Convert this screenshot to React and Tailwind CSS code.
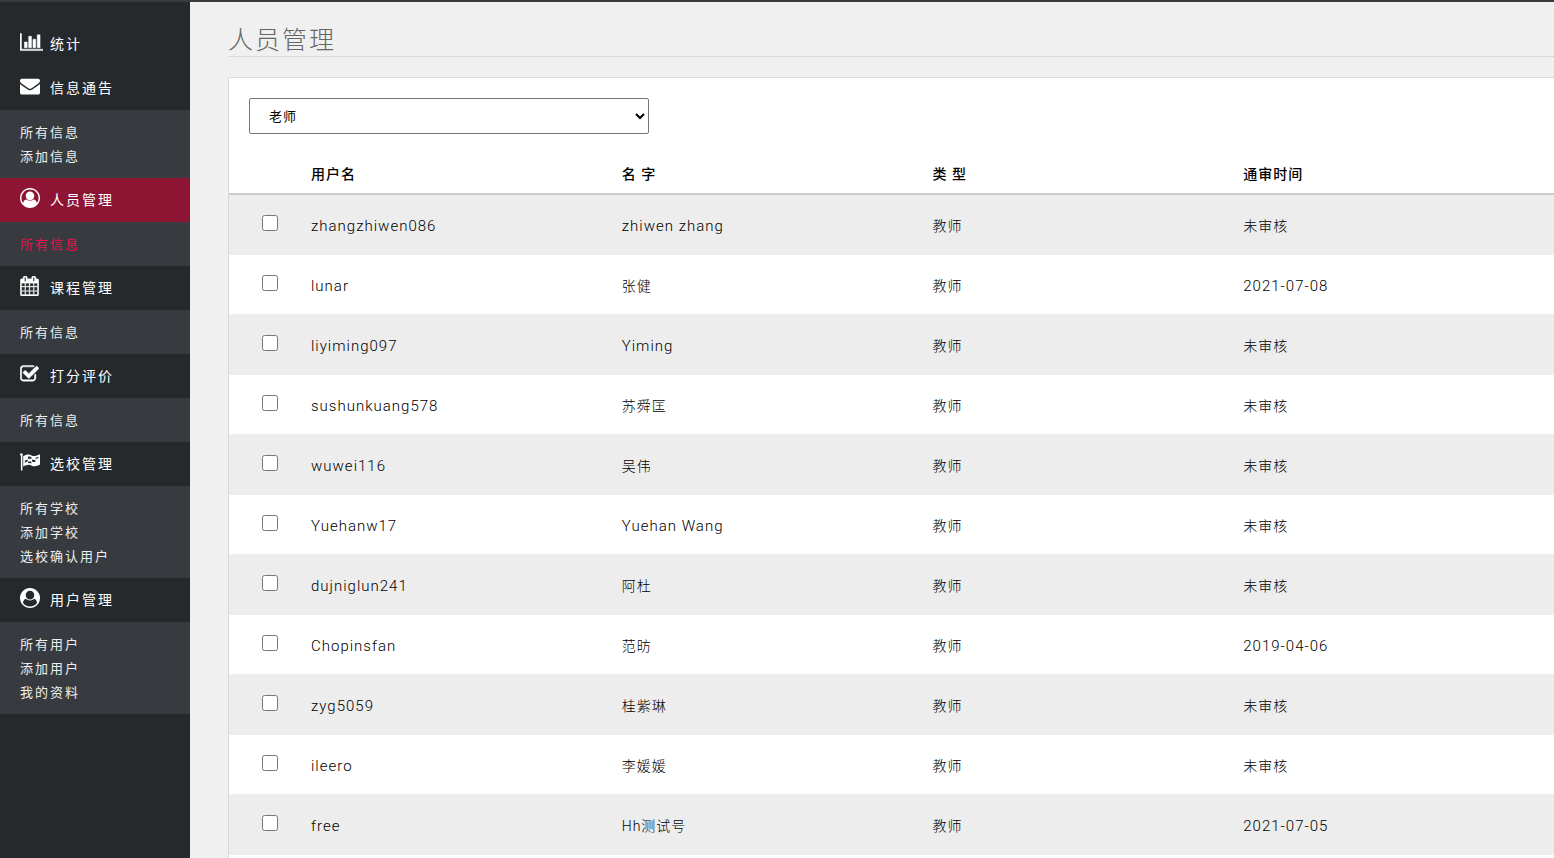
import React from 'react';

const BarChartIcon = () => (
    <svg viewBox="0 0 2048 1792" className="h-5 w-[23px]" fill="currentColor" stroke="currentColor" strokeWidth="40" aria-hidden="true">
        <path d="M640 896v512h-256v-512h256zm384-512v1024h-256v-1024h256zm1024 1152v128h-2048v-1536h128v1408h1920zm-640-896v768h-256v-768h256zm384-384v1152h-256v-1152h256z" />
    </svg>
);

const EnvelopeIcon = () => (
    <svg viewBox="0 0 1792 1792" className="h-5 w-5" fill="currentColor" aria-hidden="true">
        <path d="M1792 710v794q0 66-47 113t-113 47h-1472q-66 0-113-47t-47-113v-794q44 49 101 87 362 246 497 345 57 42 92.5 65.5t94.5 48 110 24.5h2q51 0 110-24.5t94.5-48 92.5-65.5q170-123 498-345 57-39 100-87zm0-294q0 79-49 151t-122 123q-376 261-468 325-10 7-42.5 31t-54 38.5-52 32.5-57.5 27-50 9h-2q-23 0-50-9t-57.5-27-52-32.5-54-38.5-42.5-31q-91-64-262-182.5t-205-142.5q-62-42-117-115.5t-55-136.5q0-78 41.5-130t118.5-52h1472q65 0 112.5 47t47.5 113z" />
    </svg>
);

const UserOutlineIcon = () => (
    <svg viewBox="0 0 1792 1792" className="h-5 w-5" fill="currentColor" aria-hidden="true">
        <path d="M896 0q182 0 348 71t286 191 191 286 71 348q0 181-70.5 347t-190.5 286-286 191.5-349 71.5-349-71-285.5-191.5-190.5-286-71-347.5 71-348 191-286 286-191 348-71zm619 1351q149-205 149-455 0-156-61-298t-164-245-245-164-298-61-298 61-245 164-164 245-61 298q0 250 149 455 66-327 306-327 131 128 313 128t313-128q240 0 306 327zm-235-647q0-159-112.5-271.5t-271.5-112.5-271.5 112.5-112.5 271.5 112.5 271.5 271.5 112.5 271.5-112.5 112.5-271.5z" />
    </svg>
);

const CalendarIcon = () => (
    <svg viewBox="0 0 1664 1792" className="h-5 w-[19px]" fill="currentColor" stroke="currentColor" strokeWidth="30" aria-hidden="true">
        <path d="M128 1664h288v-288h-288v288zm352 0h320v-288h-320v288zm-352-352h288v-320h-288v320zm352 0h320v-320h-320v320zm-352-384h288v-288h-288v288zm736 736h320v-288h-320v288zm-384-736h320v-288h-320v288zm768 736h288v-288h-288v288zm-384-352h320v-320h-320v320zm-352-864v-288q0-13-9.5-22.5t-22.5-9.5h-64q-13 0-22.5 9.5t-9.5 22.5v288q0 13 9.5 22.5t22.5 9.5h64q13 0 22.5-9.5t9.5-22.5zm736 864h288v-320h-288v320zm-384-384h320v-288h-320v288zm384 0h288v-288h-288v288zm32-480v-288q0-13-9.5-22.5t-22.5-9.5h-64q-13 0-22.5 9.5t-9.5 22.5v288q0 13 9.5 22.5t22.5 9.5h64q13 0 22.5-9.5t9.5-22.5zm384-64v1280q0 52-38 90t-90 38h-1408q-52 0-90-38t-38-90v-1280q0-52 38-90t90-38h128v-96q0-66 47-113t113-47h64q66 0 113 47t47 113v96h384v-96q0-66 47-113t113-47h64q66 0 113 47t47 113v96h128q52 0 90 38t38 90z" />
    </svg>
);

const CheckSquareIcon = () => (
    <svg viewBox="0 0 1664 1792" className="h-5 w-[19px]" fill="currentColor" stroke="currentColor" strokeWidth="40" aria-hidden="true">
        <path d="M1408 930v318q0 119-84.5 203.5t-203.5 84.5h-832q-119 0-203.5-84.5t-84.5-203.5v-832q0-119 84.5-203.5t203.5-84.5h832q63 0 117 25 15 7 18 23 3 17-9 29l-49 49q-10 10-23 10-3 0-9-2-23-6-45-6h-832q-66 0-113 47t-47 113v832q0 66 47 113t113 47h832q66 0 113-47t47-113v-254q0-13 9-22l64-64q10-10 23-10 6 0 12 3 20 8 20 29zm231-489l-814 814q-24 24-57 24t-57-24l-430-430q-24-24-24-57t24-57l110-110q24-24 57-24t57 24l263 263 647-647q24-24 57-24t57 24l110 110q24 24 24 57t-24 57z" />
    </svg>
);

const FlagIcon = () => (
    <svg viewBox="0 0 20 20" className="h-5 w-5" fill="currentColor" aria-hidden="true">
        <path d="M0 2.6A1.4 1.4 0 1 1 2.4 3.7V18.6H0.9V3.7A1.4 1.4 0 0 1 0 2.6Z" />
        <path fillRule="evenodd" d="M3.2 4.2C6.4 2.2 9 1.8 11.6 3.4C14 4.8 16.6 3.6 20 2.2V12.6C16.6 14.4 14 15 11.4 13.4C9 12 6.4 12.6 3.2 14.6ZM8 4.8V7C9.2 6.5 10.3 6.5 11.4 7V5.2C10.3 4.5 9.2 4.4 8 4.8ZM12 7.6V9.6C13.2 10.2 14.2 10.2 15.4 9.8V7.8C14.2 8.2 13.2 8.2 12 7.6ZM7.6 7.6C6.6 8 5.6 8.4 4.8 8.9V10.8C5.6 10.3 6.6 9.9 7.6 9.5ZM8 9.8V11.3C9.2 10.9 10.3 11 11.4 11.6V9.8C10.3 9.3 9.2 9.3 8 9.8ZM15.8 7.2C16.8 6.9 17.6 6.5 18.4 6.1V4.7C17.6 5.1 16.8 5.5 15.8 5.7Z" />
    </svg>
);

const UserCircleIcon = () => (
    <svg viewBox="0 0 1792 1792" className="h-5 w-5" fill="currentColor" aria-hidden="true">
        <path d="M1523 1339q-22-155-87.5-257.5t-184.5-118.5q-67 74-159.5 115.5t-195.5 41.5-195.5-41.5-159.5-115.5q-119 16-184.5 118.5t-87.5 257.5q106 150 271 237.5t356 87.5 356-87.5 271-237.5zm-243-699q0-159-112.5-271.5t-271.5-112.5-271.5 112.5-112.5 271.5 112.5 271.5 271.5 112.5 271.5-112.5 112.5-271.5zm512 256q0 182-71 347.5t-190.5 286-285.5 191.5-349 71q-182 0-348-71t-286-191-191-286-71-348 71-348 191-286 286-191 348-71 348 71 286 191 191 286 71 348z" />
    </svg>
);

const menu = [
    { label: '统计', icon: BarChartIcon, items: [] },
    { label: '信息通告', icon: EnvelopeIcon, items: ['所有信息', '添加信息'] },
    { label: '人员管理', icon: UserOutlineIcon, items: ['所有信息'], active: true },
    { label: '课程管理', icon: CalendarIcon, items: ['所有信息'] },
    { label: '打分评价', icon: CheckSquareIcon, items: ['所有信息'] },
    { label: '选校管理', icon: FlagIcon, items: ['所有学校', '添加学校', '选校确认用户'] },
    { label: '用户管理', icon: UserCircleIcon, items: ['所有用户', '添加用户', '我的资料'] },
];

const users = [
    { username: 'zhangzhiwen086', name: 'zhiwen zhang', date: '' },
    { username: 'lunar', name: '张健', date: '2021-07-08' },
    { username: 'liyiming097', name: 'Yiming', date: '' },
    { username: 'sushunkuang578', name: '苏舜匡', date: '' },
    { username: 'wuwei116', name: '吴伟', date: '' },
    { username: 'Yuehanw17', name: 'Yuehan Wang', date: '' },
    { username: 'dujniglun241', name: '阿杜', date: '' },
    { username: 'Chopinsfan', name: '范昉', date: '2019-04-06' },
    { username: 'zyg5059', name: '桂紫琳', date: '' },
    { username: 'ileero', name: '李媛媛', date: '' },
    { username: 'free', name: 'Hh测试号', date: '2021-07-05' },
];

// Latin text is set one pixel larger than Chinese text
const textSize = (text) => (/^[\x20-\x7e]+$/.test(text) ? 'text-[15px]' : 'text-[14px]');

const Sidebar = () => (
    <nav className="w-[190px] shrink-0 bg-[#26292c] pt-5 text-white">
        {menu.map(({ label, icon: Icon, items, active }) => (
            <div key={label}>
                <a href="#" className={`flex h-11 items-center px-5 ${active ? 'bg-[#8e1433]' : ''}`}>
                    <span className="w-[30px] pb-1">
                        <Icon />
                    </span>
                    <span className="text-[14px] tracking-[2px]">{label}</span>
                </a>
                {items.length > 0 && (
                    <ul className="bg-[#373b3f] px-5 pb-[9px] pt-[11px]">
                        {items.map((item) => (
                            <li key={item} className="h-6">
                                <a href="#" className={`block text-[13px] leading-6 tracking-[2px] ${active ? 'text-[#e8114b]' : 'text-[#eeeeee]'}`}>
                                    {item}
                                </a>
                            </li>
                        ))}
                    </ul>
                )}
            </div>
        ))}
    </nav>
);

const UserTable = () => (
    <table className="w-full table-fixed border-collapse text-left text-black">
        <colgroup>
            <col className="w-[62px]" />
            <col />
            <col />
            <col />
            <col />
            <col className="w-5" />
        </colgroup>
        <thead>
            <tr className="h-10 border-b-2 border-[#cccccc] text-[14px] tracking-[1px]">
                <th></th>
                <th className="px-5 pt-[2px] font-medium">用户名</th>
                <th className="px-5 pt-[2px] font-medium">名 字</th>
                <th className="px-5 pt-[2px] font-medium">类 型</th>
                <th className="px-5 pt-[2px] font-medium">通审时间</th>
                <th></th>
            </tr>
        </thead>
        <tbody>
            {users.map(({ username, name, date }) => (
                <tr key={username} className="h-[60px] border-b border-[#ededed] font-light tracking-[1px] odd:bg-[#ededed]">
                    <td className="pb-[2px] pl-[33px]">
                        <input type="checkbox" aria-label={username} className="block h-4 w-4" />
                    </td>
                    <td className={`px-5 pt-1 ${textSize(username)}`}>{username}</td>
                    <td className={`px-5 pt-1 ${textSize(name)}`}>{name}</td>
                    <td className="px-5 pt-1 text-[14px]">教师</td>
                    <td className={`px-5 pt-1 ${textSize(date || '未审核')}`}>{date || '未审核'}</td>
                    <td></td>
                </tr>
            ))}
        </tbody>
    </table>
);

const App = () => {
    return (
        <div className="flex h-screen flex-col overflow-hidden border-t-2 border-[#373b3f] bg-[#f0f0f0] font-[Roboto,'Noto_Sans_CJK_SC',sans-serif]">
            <div className="flex min-h-0 flex-1">
                <Sidebar />
                <main className="min-w-0 flex-1 pl-[38px] pt-6">
                    <h1 className="border-b border-[#d9d9d9] text-[25px] font-light leading-[30px] tracking-[2px] text-[#666666]">人员管理</h1>
                    <section className="mt-5 min-h-full border-l border-t border-[#d9d9d9] bg-white">
                        <div className="p-5">
                            <select aria-label="用户类型" className="h-9 w-[400px] rounded-xs border border-[#767676] bg-white px-[15px] text-[13px] tracking-[1px] text-black">
                                <option>老师</option>
                                <option>学生</option>
                            </select>
                        </div>
                        <UserTable />
                    </section>
                </main>
            </div>
        </div>
    );
};

export default App;
